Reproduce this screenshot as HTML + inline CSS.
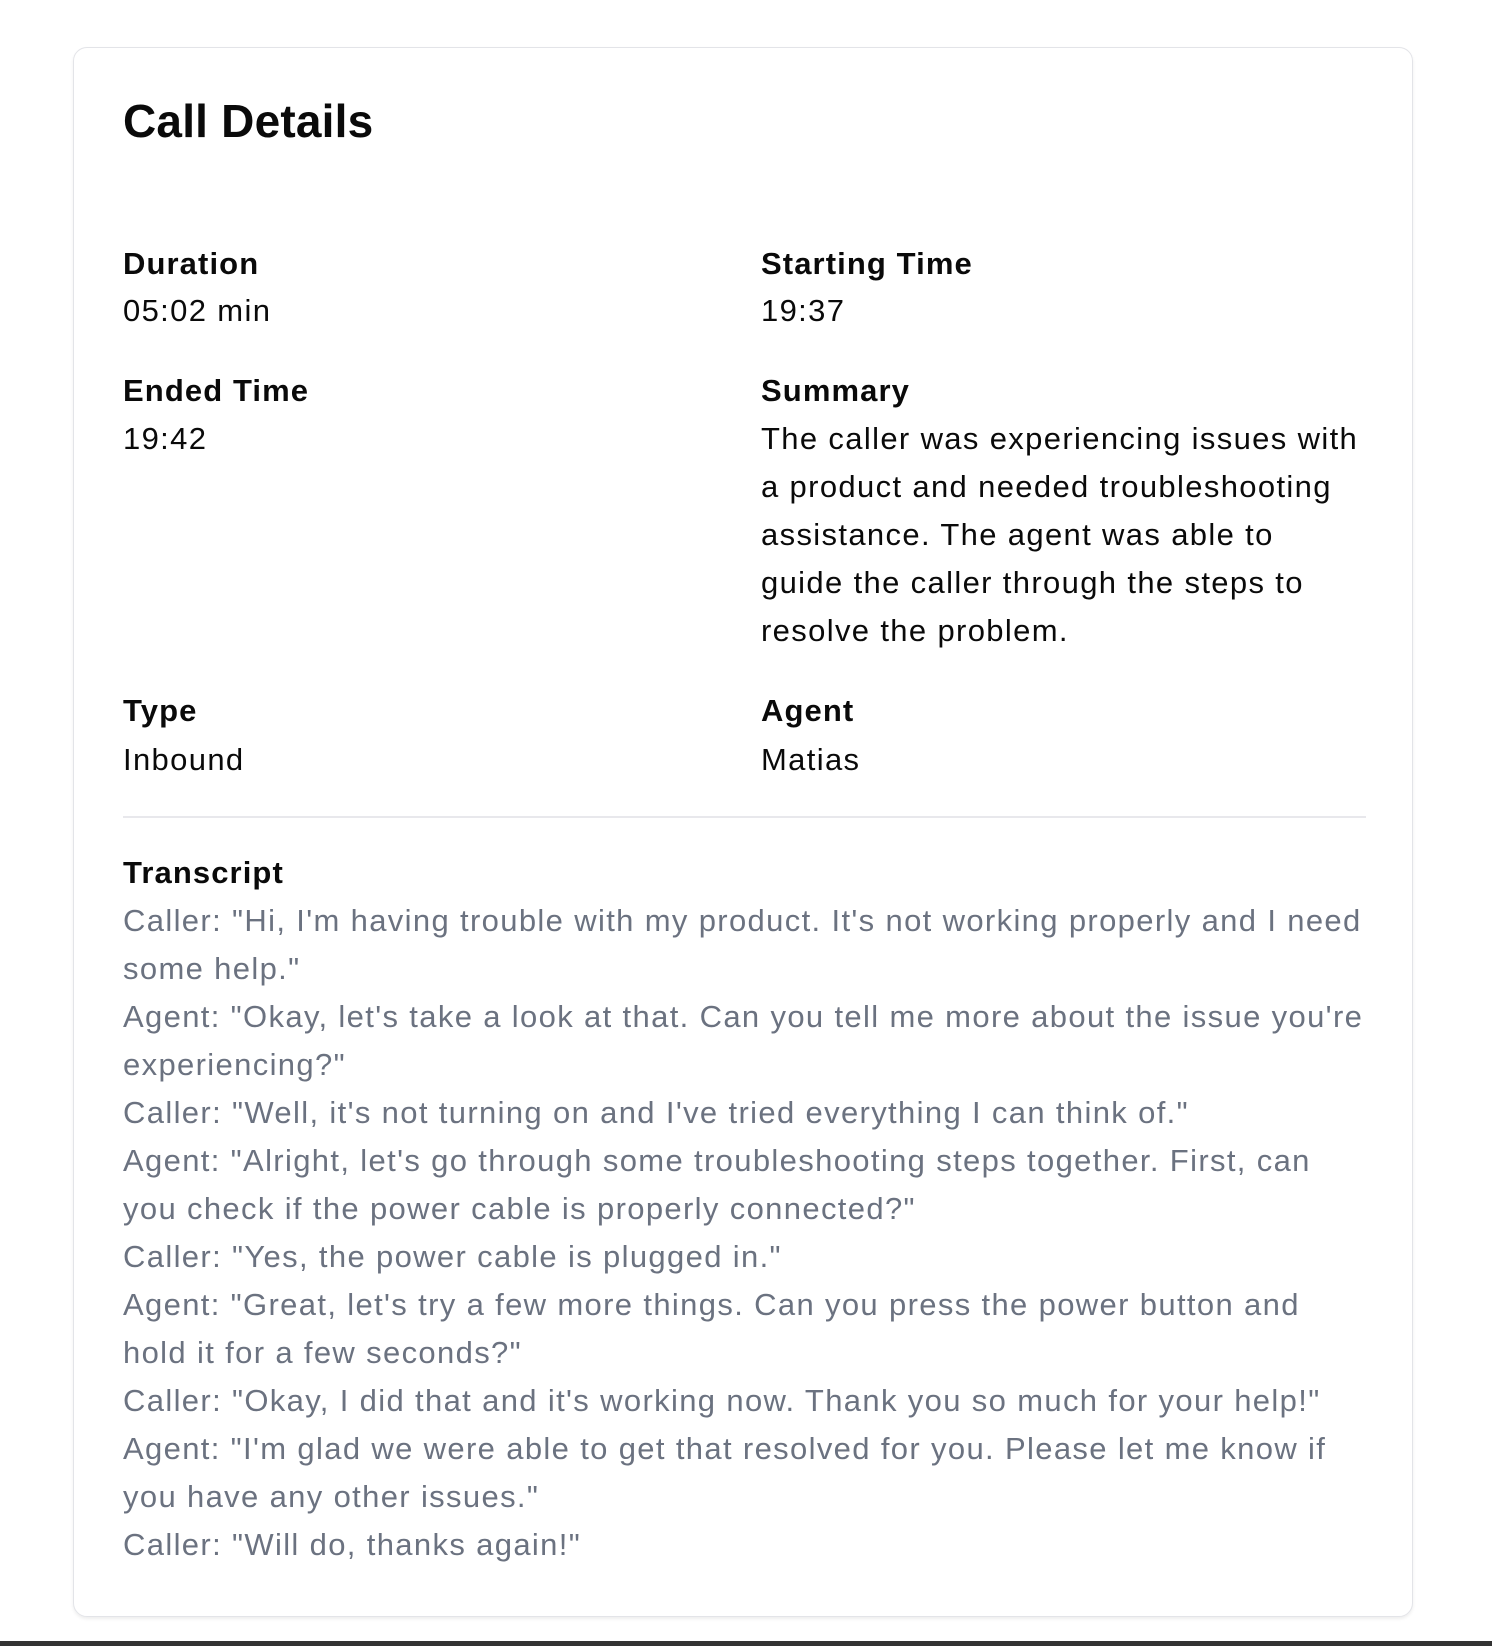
<!DOCTYPE html>
<html><head><meta charset="utf-8"><style>
body{margin:0;background:#fff;width:1492px;height:1646px;position:relative;overflow:hidden;font-family:"Liberation Sans",Arial,sans-serif;color:#0a0a0a}
.card{position:absolute;left:73px;top:47px;width:1340px;height:1570px;border:1.5px solid #e3e4e8;border-radius:14px;box-shadow:0 2px 3px rgba(0,0,0,.07);box-sizing:border-box}
.t{position:absolute;font-size:31px;line-height:48px;white-space:nowrap;letter-spacing:1.35px}
.b{font-weight:bold;letter-spacing:1.1px}
h1{position:absolute;left:123px;top:93px;margin:0;font-size:46px;line-height:56px;font-weight:bold;letter-spacing:0.2px}
.g{color:#6b7280}
.hr{position:absolute;left:123px;top:816px;width:1243px;height:1.5px;background:#e8e8ec}
.foot{position:absolute;left:0;top:1641px;width:1492px;height:5px;background:#333}
</style></head><body>
<div class="card"></div>
<h1>Call Details</h1>
<div class="t b" style="left:123px;top:240px">Duration</div>
<div class="t" style="left:123px;top:287px">05:02 min</div>
<div class="t b" style="left:761px;top:240px">Starting Time</div>
<div class="t" style="left:761px;top:287px">19:37</div>
<div class="t b" style="left:123px;top:367px">Ended Time</div>
<div class="t" style="left:123px;top:415px">19:42</div>
<div class="t b" style="left:761px;top:367px">Summary</div>
<div class="t" style="left:761px;top:415px">The caller was experiencing issues with<br>a product and needed troubleshooting<br>assistance. The agent was able to<br>guide the caller through the steps to<br>resolve the problem.</div>
<div class="t b" style="left:123px;top:687px">Type</div>
<div class="t" style="left:123px;top:736px">Inbound</div>
<div class="t b" style="left:761px;top:687px">Agent</div>
<div class="t" style="left:761px;top:736px">Matias</div>
<div class="hr"></div>
<div class="t b" style="left:123px;top:849px">Transcript</div>
<div class="t g" style="left:123px;top:897px">Caller: "Hi, I'm having trouble with my product. It's not working properly and I need<br>some help."<br>Agent: "Okay, let's take a look at that. Can you tell me more about the issue you're<br>experiencing?"<br>Caller: "Well, it's not turning on and I've tried everything I can think of."<br>Agent: "Alright, let's go through some troubleshooting steps together. First, can<br>you check if the power cable is properly connected?"<br>Caller: "Yes, the power cable is plugged in."<br>Agent: "Great, let's try a few more things. Can you press the power button and<br>hold it for a few seconds?"<br>Caller: "Okay, I did that and it's working now. Thank you so much for your help!"<br>Agent: "I'm glad we were able to get that resolved for you. Please let me know if<br>you have any other issues."<br>Caller: "Will do, thanks again!"</div>
<div class="foot"></div>
</body></html>
